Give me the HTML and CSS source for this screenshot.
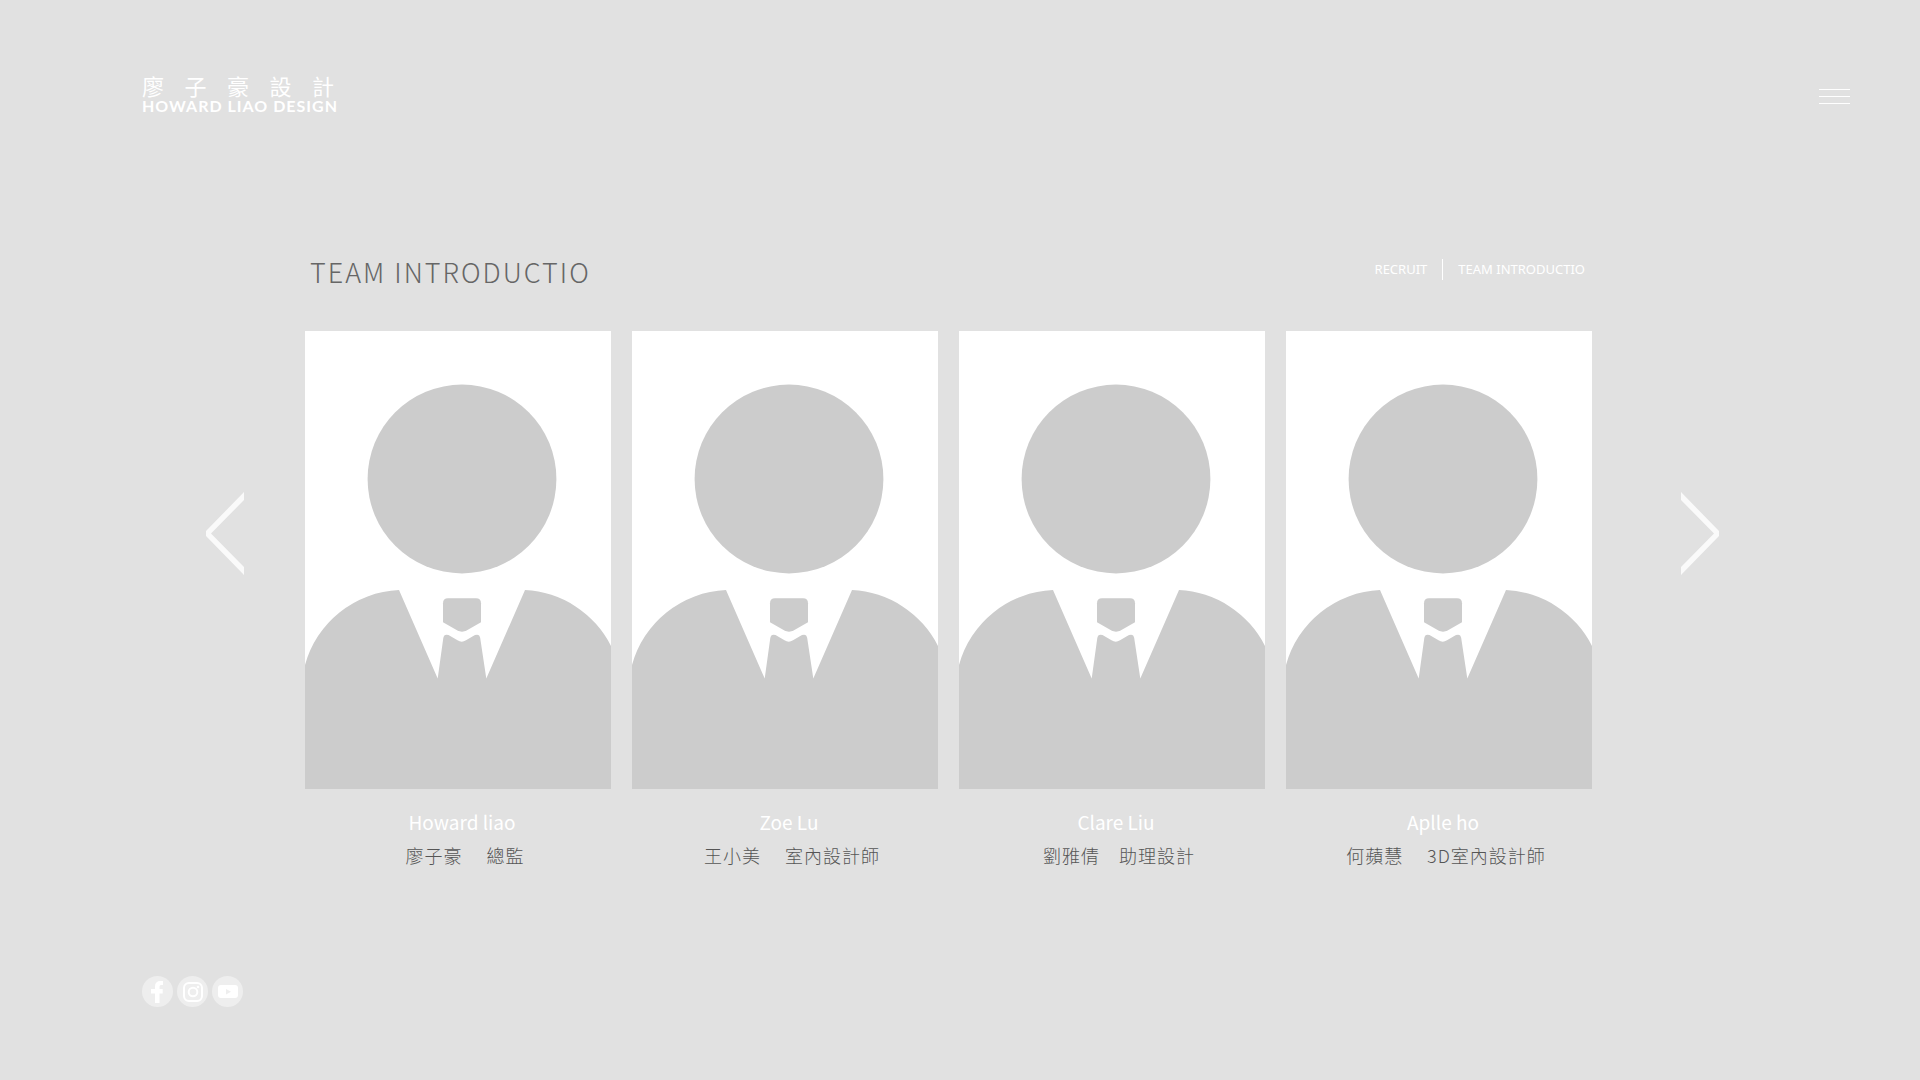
FILE: index.html
```html
<!DOCTYPE html>
<html lang="zh-Hant">
<head>
<meta charset="utf-8">
<meta name="viewport" content="width=device-width, initial-scale=1">
<title>廖子豪設計 Howard Liao Design</title>
<link rel="stylesheet" href="styles.css">
</head>
<body>
<svg class="defs" aria-hidden="true">
  <symbol id="person" viewBox="0 0 306 458">
    <circle cx="157" cy="148" r="94.4"/>
    <path d="M0 334A102 102 0 0 1 94 259L132.7 347.5L138.3 307Q139 302.500 143.500 304L152.500 309.300Q156.700 312 161 309.300L170 304Q174.500 302.500 175.200 307L181.300 347.500L220 259A102 102 0 0 1 306 315V458H0Z"/>
    <path d="M143 267.300H171Q176 267.300 176 272.300V291.300L162 299.300Q157 302 152 299.300L138 291.300V272.300Q138 267.300 143 267.300Z"/>
  </symbol>
</svg>

<header class="header">
  <a class="logo" href="#">
    <span class="logo-zh">廖子豪設計</span>
    <span class="logo-en">HOWARD LIAO DESIGN</span>
  </a>
  <button class="menu" type="button" aria-label="Menu"><span></span><span></span><span></span></button>
</header>

<main class="stage">
  <button class="arrow" type="button" aria-label="Previous">
    <svg viewBox="0 0 38 84"><path d="M38 0V8L5 41.500L38 75V83L0 44V39Z"/></svg>
  </button>

  <section class="team">
    <div class="team-head">
      <h1>TEAM INTRODUCTIO</h1>
      <nav class="tabs">
        <a href="#">RECRUIT</a>
        <a href="#">TEAM INTRODUCTIO</a>
      </nav>
    </div>
    <ul class="cards">
      <li class="card">
        <svg class="photo"><use href="#person"/></svg>
        <h2>Howard liao</h2>
        <p>廖子豪&#x3000;&nbsp;總監</p>
      </li>
      <li class="card">
        <svg class="photo"><use href="#person"/></svg>
        <h2>Zoe Lu</h2>
        <p>王小美&#x3000;&nbsp;室內設計師</p>
      </li>
      <li class="card">
        <svg class="photo"><use href="#person"/></svg>
        <h2>Clare Liu</h2>
        <p>劉雅倩&#x3000;助理設計</p>
      </li>
      <li class="card">
        <svg class="photo"><use href="#person"/></svg>
        <h2>Aplle ho</h2>
        <p>何蘋慧&#x3000;&nbsp;3D室內設計師</p>
      </li>
    </ul>
  </section>

  <button class="arrow" type="button" aria-label="Next">
    <svg viewBox="0 0 38 84"><path d="M0 0V8L33 41.500L0 75V83L38 44V39Z"/></svg>
  </button>
</main>

<footer class="social">
  <a href="#" aria-label="Facebook"><svg viewBox="0 0 31 31"><path d="M13 27V17.500H9V13H13V10.500Q13 5 18.500 5H21V9H19Q17.500 9 17.500 10.700V13H20.700V17.500H17.500V27Z"/></svg></a>
  <a href="#" aria-label="Instagram"><svg viewBox="0 0 31 31"><rect class="line" x="7" y="7" width="18" height="18" rx="5"/><circle class="line" cx="16" cy="16" r="4.300"/><circle cx="21" cy="11" r="1.300"/></svg></a>
  <a href="#" aria-label="YouTube"><svg viewBox="0 0 31 31"><path fill-rule="evenodd" d="M9 9H23Q26 9 26 12V19Q26 22 23 22H9Q6 22 6 19V12Q6 9 9 9ZM14 13V18.500L19 15.700Z"/></svg></a>
</footer>
</body>
</html>
```
FILE: styles.css
```css
* { box-sizing: border-box; }

body {
  margin: 0;
  min-height: 100vh;
  display: flex;
  flex-direction: column;
  background: #e1e1e1;
  color: #fff;
  font-family: "Noto Sans CJK TC", sans-serif;
}

h1, h2, p, ul { margin: 0; padding: 0; }
a { color: inherit; text-decoration: none; }
button { padding: 0; border: 0; background: none; cursor: pointer; }
svg { display: block; }
.defs { width: 0; height: 0; position: absolute; }

.header {
  display: flex;
  justify-content: space-between;
  align-items: center;
  padding: 74px 70px 0 142px;
}

.logo { width: 192px; padding-bottom: 2px; }
.logo span { display: block; white-space: nowrap; }
.logo-zh {
  font-size: 22px;
  line-height: 22px;
  font-weight: 400;
  text-align-last: justify;
}
.logo-en {
  font-family: Lato, sans-serif;
  font-size: 16px;
  line-height: 20px;
  font-weight: 700;
  letter-spacing: 1px;
}

.menu { display: grid; gap: 6px; width: 31px; }
.menu span { height: 1px; background: #fff; }

.stage {
  display: flex;
  align-items: flex-start;
  justify-content: space-between;
  padding: 134px 201px 0 206px;
}

.arrow { flex: none; width: 38px; margin-top: 240px; }
.arrow svg { width: 38px; height: 84px; fill: #fafafa; }

.team { flex: 1; margin: 0 89px 0 61px; }

.team-head {
  display: flex;
  justify-content: space-between;
  align-items: flex-start;
  padding: 0 7px 0 5px;
  height: 79px;
}
.team-head h1 {
  color: #666;
  font-size: 27px;
  line-height: 40px;
  font-weight: 300;
  letter-spacing: 2px;
}

.tabs {
  display: flex;
  padding-top: 7px;
  font-family: "Noto Sans", sans-serif;
  font-size: 13px;
  line-height: 21px;
}
.tabs a + a { margin-left: 15px; padding-left: 15px; border-left: 1px solid #fff; }

.cards {
  display: grid;
  grid-template-columns: repeat(4, 1fr);
  gap: 21px;
  list-style: none;
  text-align: center;
}
.photo {
  width: 100%;
  height: auto;
  aspect-ratio: 306 / 458;
  background: #fff;
  fill: #ccc;
}
.card h2 {
  margin-top: 20px;
  padding-left: 8px;
  font-size: 19px;
  line-height: 26px;
  font-weight: 400;
}
.card p {
  margin-top: 7px;
  padding-left: 14px;
  color: #555;
  font-size: 18px;
  line-height: 26px;
  font-weight: 300;
  letter-spacing: 1px;
}

.social { display: flex; gap: 4px; margin-top: auto; padding: 40px 142px 73px; }
.social a { width: 31px; height: 31px; border-radius: 50%; background: #eee; }
.social svg { fill: #fff; }
.social .line { fill: none; stroke: #fff; stroke-width: 2; }
```
